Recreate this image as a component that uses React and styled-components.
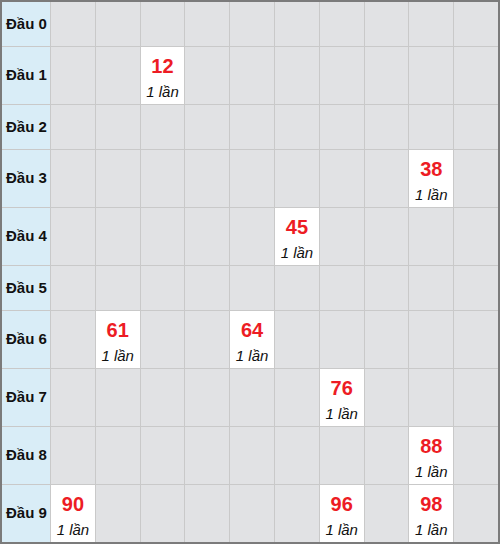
import React from 'react';
import styled, { createGlobalStyle } from 'styled-components';

const GlobalStyle = createGlobalStyle`
  body {
    margin: 0;
    background: #fff;
    font-family: 'Liberation Sans', Arial, sans-serif;
  }
`;

const StyledBoard = styled.div`
  box-sizing: border-box;
  width: 500px;
  border: 2px solid #7b7b7b;
  background: #c9c9c9;
  display: grid;
  grid-template-columns: 48px repeat(10, 1fr);
  gap: 1px;
`;

const StyledRow = styled.div`
  display: contents;
`;

const StyledHead = styled.div`
  box-sizing: border-box;
  height: ${props => (props.tall ? '57px' : '44px')};
  background: #d9edf7;
  display: flex;
  align-items: center;
  padding: 0 0 2px 4px;
  font-size: 15px;
  font-weight: bold;
  color: #111;
  white-space: nowrap;
`;

const StyledCell = styled.div`
  background: ${props => (props.filled ? '#fff' : '#e1e2e4')};
  display: flex;
  flex-direction: column;
  align-items: center;
  padding-top: 7px;
  box-sizing: border-box;

  .num {
    font-size: 20px;
    line-height: 24px;
    font-weight: bold;
    color: #ed1c24;
  }

  .count {
    margin-top: 4px;
    font-size: 15px;
    line-height: 20px;
    font-style: italic;
    color: #111;
  }
`;

const hits = ['12', '38', '45', '61', '64', '76', '88', '90', '96', '98'];

const Board = () => (
  <StyledBoard>
    {Array.from({ length: 10 }, (_, head) => {
      const row = hits.filter(n => Number(n[0]) === head);
      return (
        <StyledRow key={head}>
          <StyledHead tall={row.length > 0}>Đầu {head}</StyledHead>
          {Array.from({ length: 10 }, (_, tail) => {
            const num = row.find(n => Number(n[1]) === tail);
            return (
              <StyledCell key={tail} filled={!!num}>
                {num && (
                  <>
                    <span className="num">{num}</span>
                    <span className="count">1 lần</span>
                  </>
                )}
              </StyledCell>
            );
          })}
        </StyledRow>
      );
    })}
  </StyledBoard>
);

const App = () => (
  <>
    <GlobalStyle />
    <Board />
  </>
);

export default App;
